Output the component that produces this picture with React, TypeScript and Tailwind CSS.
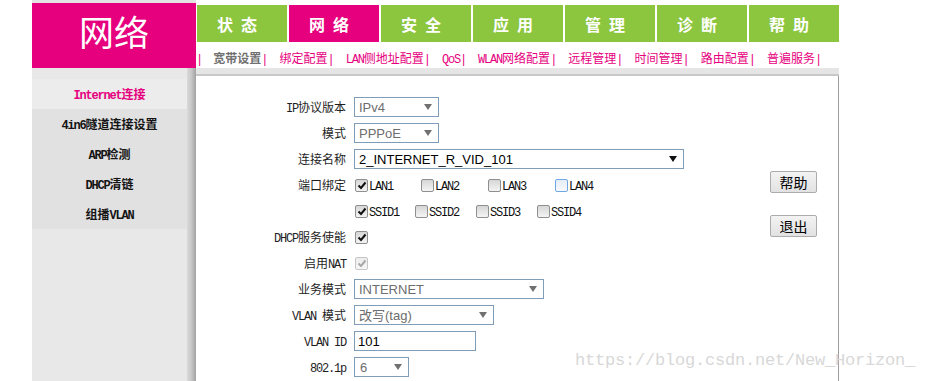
import React from "react";

const tabs = ["状态", "网络", "安全", "应用", "管理", "诊断", "帮助"];
const subs = ["宽带设置", "绑定配置", "LAN侧地址配置", "QoS", "WLAN网络配置", "远程管理", "时间管理", "路由配置", "普遍服务"];
const sideItems = ["Internet连接", "4in6隧道连接设置", "ARP检测", "DHCP清链", "组播VLAN"];

// latin runs are narrowed so they sit like the half-width glyphs of the original font
const Mix: React.FC<{ text: string }> = ({ text }) => (
  <>
    {text.split(/([\x20-\x7e]+)/).map((p, i) =>
      /[\x20-\x7e]/.test(p) ? (
        <span key={i} className="tracking-[-1.2px]">{p}</span>
      ) : (
        <React.Fragment key={i}>{p}</React.Fragment>
      )
    )}
  </>
);

const Arrow: React.FC<{ dark?: boolean }> = ({ dark }) => (
  <svg width="8" height="6" viewBox="0 0 8 6">
    <path d="M0 0h8L4 6z" fill={dark ? "#111" : "#707070"} />
  </svg>
);

const Select: React.FC<{ w: string; value: string; dark?: boolean; pl?: string }> = ({ w, value, dark, pl = "pl-[4px]" }) => (
  <div
    className={`${w} ${pl} h-[20px] border border-[#7f9db9] bg-white flex items-center justify-between pr-[6px] [font-family:'Liberation_Sans','Noto_Sans_CJK_SC',sans-serif] text-[13px] leading-none ${dark ? "text-black" : "text-[#6d6d6d]"}`}
  >
    <span>{value}</span>
    <Arrow dark={dark} />
  </div>
);

const Box: React.FC<{ checked?: boolean; disabled?: boolean; focus?: boolean }> = ({ checked, disabled, focus }) => (
  <span
    className={`w-[13px] h-[13px] rounded-[2px] border inline-flex items-center justify-center shrink-0 ${
      focus
        ? "border-[#6fa7e6] bg-linear-to-b from-[#e6eef8] to-[#f7f9fc]"
        : disabled
          ? "border-[#c6c6c6] bg-linear-to-b from-[#ececec] to-[#f8f8f8]"
          : "border-[#8e8f8f] bg-linear-to-b from-[#d6d6d6] to-[#f4f4f4]"
    }`}
  >
    {checked && (
      <svg width="10" height="9" viewBox="0 0 10 9">
        <path d="M1.5 4.5 L4 7 L8.5 1.5" stroke={disabled ? "#a8a8a8" : "#111"} strokeWidth="2" fill="none" />
      </svg>
    )}
  </span>
);

const Check: React.FC<{ label: string; w: string; checked?: boolean; focus?: boolean }> = ({ label, w, checked, focus }) => (
  <span className={`${w} inline-flex items-end`}>
    <Box checked={checked} focus={focus} />
    <span className="ml-[1px] leading-none text-[#111] translate-y-[1px]">
      <Mix text={label} />
    </span>
  </span>
);

const Row: React.FC<{ label?: string; children?: React.ReactNode }> = ({ label = "", children }) => (
  <div className="h-[26px] flex items-center">
    <div className="w-[150px] text-right text-[#1e1e1e] leading-none pt-[4px]">
      <Mix text={label} />
    </div>
    <div className="ml-[8px] flex items-center">{children}</div>
  </div>
);

const Btn: React.FC<{ label: string }> = ({ label }) => (
  <button className="w-[47px] h-[22px] border border-[#acacac] rounded-[2px] bg-linear-to-b from-[#f3f3f3] to-[#e2e2e2] text-[14px] leading-none text-black [font-family:'Noto_Sans_CJK_SC',sans-serif]">
    {label}
  </button>
);

export default function App() {
  return (
    <div className="relative w-[926px] h-[381px] overflow-hidden bg-white flex pl-[32px] text-[12px] [font-family:'Liberation_Mono','Noto_Sans_CJK_SC',monospace]">
      <aside className="w-[164px] flex flex-col">
        <div className="h-[3px] bg-[#e3e3e3]" />
        <div className="h-[65px] bg-[#e6007e] flex items-center justify-center pb-[10px] text-white text-[35px] leading-none [font-family:'Noto_Sans_CJK_SC',sans-serif]">
          网络
        </div>
        <div className="flex-1 flex">
          <div className="w-[155px] bg-[#e8e8e8] pt-[11px] font-bold">
            {sideItems.map((s, i) => (
              <div
                key={s}
                className={`h-[30px] flex items-center justify-center pt-[3px] ${
                  i === 0 ? "bg-[#ececec] text-[#e6007e]" : "bg-[#e1e1e1] text-[#141414]"
                }`}
              >
                <Mix text={s} />
              </div>
            ))}
          </div>
          <div className="w-[9px] bg-linear-to-r from-[#dadada] via-[#c6c6c6] to-[#a2a2a2]" />
        </div>
      </aside>

      <main className="w-[643px] flex flex-col">
        <div className="h-[5px]" />
        <nav className="h-[37px] flex gap-[2px] pl-[1px]">
          {tabs.map((t, i) => (
            <div
              key={t}
              className={`w-[90px] flex items-center justify-center gap-[8px] pr-[10px] text-white text-[16px] font-bold [font-family:'Noto_Sans_CJK_SC',sans-serif] ${
                i === 1 ? "bg-[#e6007e]" : "bg-[#8cc63f]"
              }`}
            >
              {t.split("").map((c) => (
                <span key={c}>{c}</span>
              ))}
            </div>
          ))}
        </nav>
        <div className="h-[26px] flex items-center pt-[9px] text-[#e6007e] leading-none">
          <span>|</span>
          {subs.map((s, i) => (
            <React.Fragment key={s}>
              <span className={i === 0 ? "ml-[10px] text-[#707070] font-bold" : "ml-[11px]"}>
                <Mix text={s} />
              </span>
              <span>|</span>
            </React.Fragment>
          ))}
        </div>
        <div className="h-[8px] bg-[#e5e5e5] border-b-2 border-[#c8c8c8]" />

        <section className="flex-1 flex border-r border-[#9d9d9d]">
          <div className="flex-1 pt-[18px]">
            <Row label="IP协议版本">
              <Select w="w-[85px]" value="IPv4" />
            </Row>
            <Row label="模式">
              <Select w="w-[85px]" value="PPPoE" />
            </Row>
            <Row label="连接名称">
              <Select w="w-[330px]" value="2_INTERNET_R_VID_101" dark />
            </Row>
            <Row label="端口绑定">
              <span className="ml-[1px] flex">
                <Check w="w-[66px]" label="LAN1" checked />
                <Check w="w-[67px]" label="LAN2" />
                <Check w="w-[67px]" label="LAN3" />
                <Check w="w-[67px]" label="LAN4" focus />
              </span>
            </Row>
            <Row>
              <span className="ml-[1px] flex">
                <Check w="w-[60px]" label="SSID1" checked />
                <Check w="w-[61px]" label="SSID2" />
                <Check w="w-[61px]" label="SSID3" />
                <Check w="w-[61px]" label="SSID4" />
              </span>
            </Row>
            <Row label="DHCP服务使能">
              <span className="ml-[1px] flex">
                <Box checked />
              </span>
            </Row>
            <Row label="启用NAT">
              <span className="ml-[1px] flex">
                <Box checked disabled />
              </span>
            </Row>
            <Row label="业务模式">
              <Select w="w-[190px]" value="INTERNET" />
            </Row>
            <Row label="VLAN 模式">
              <Select w="w-[140px]" value="改写(tag)" />
            </Row>
            <Row label="VLAN ID">
              <div className="w-[122px] h-[20px] border border-[#7f9db9] bg-white flex items-center pl-[3px] [font-family:'Liberation_Sans',sans-serif] text-[13px] leading-none text-black">
                101
              </div>
            </Row>
            <Row label="802.1p">
              <Select w="w-[55px]" value="6" pl="pl-[5px]" />
            </Row>
          </div>
          <div className="w-[47px] mr-[21px] pt-[95px] flex flex-col gap-[22px]">
            <Btn label="帮助" />
            <Btn label="退出" />
          </div>
        </section>
      </main>

      <div className="absolute left-[575px] top-[352px] text-[17px] leading-[17px] text-[#d8d8d8] [font-family:'Liberation_Mono',monospace] tracking-[-0.2px]">
        https://blog.csdn.net/New_Horizon_
      </div>
    </div>
  );
}
